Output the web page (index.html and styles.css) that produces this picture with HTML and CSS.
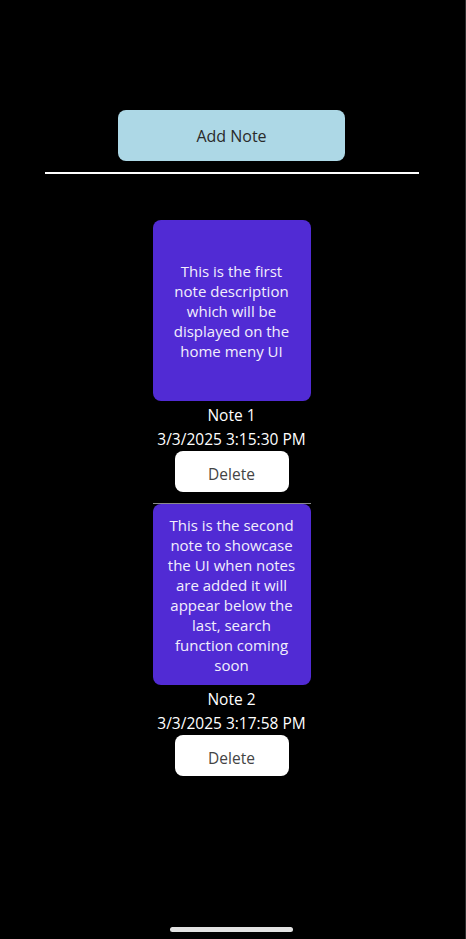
FILE: index.html
```html
<!DOCTYPE html>
<html lang="en">
<head>
<meta charset="utf-8">
<title>Notes</title>
<link rel="stylesheet" href="styles.css">
</head>
<body>
<div class="screen">
  <div class="top">
    <button class="add-btn">Add Note</button>
    <div class="rule"></div>
  </div>
  <div class="notes">
    <div class="note">
      <div class="card">This is the first note description which will be displayed on the home meny UI</div>
      <div class="title">Note 1</div>
      <div class="date">3/3/2025 3:15:30 PM</div>
      <button class="del-btn">Delete</button>
      <div class="sep"></div>
    </div>
    <div class="note">
      <div class="card">This is the second note to showcase the UI when notes are added it will appear below the last, search function coming soon</div>
      <div class="title">Note 2</div>
      <div class="date">3/3/2025 3:17:58 PM</div>
      <button class="del-btn">Delete</button>
    </div>
  </div>
  <div class="home-bar"></div>
</div>
</body>
</html>
```

FILE: styles.css
```css
html, body {
  margin: 0;
  padding: 0;
  background: #000;
}
.screen {
  position: relative;
  width: 463px;
  padding-right: 2px;
  height: 939px;
  border-right: 1px solid #2c2c2c;
  background: #000;
  font-family: "Open Sans", "Noto Sans", sans-serif;
  display: flex;
  flex-direction: column;
  align-items: center;
  overflow: hidden;
}
.top {
  padding-top: 110px;
  display: flex;
  flex-direction: column;
  align-items: center;
}
.add-btn {
  width: 227px;
  height: 51px;
  border: none;
  border-radius: 8px;
  background: #add8e6;
  color: #2a2a2a;
  font-family: inherit;
  font-size: 16px;
  padding: 0;
}
.rule {
  margin-top: 11px;
  width: 374px;
  height: 2px;
  background: #fff;
}
.notes {
  margin-top: 46px;
  display: flex;
  flex-direction: column;
  align-items: center;
}
.note {
  display: flex;
  flex-direction: column;
  align-items: center;
  width: 158px;
}
.card {
  box-sizing: border-box;
  width: 158px;
  height: 181px;
  border-radius: 8px;
  background: #512bd4;
  color: #f2effc;
  font-size: 15px;
  line-height: 20px;
  text-align: center;
  padding: 0 14px;
  display: flex;
  align-items: center;
  justify-content: center;
}
.title, .date {
  color: #fff;
  font-size: 15.5px;
  line-height: 24px;
  margin-top: 0;
}
.title {
  margin-top: 2px;
}
.del-btn {
  width: 114px;
  height: 41px;
  border: none;
  border-radius: 8px;
  background: #fff;
  color: #444;
  font-family: inherit;
  font-size: 15.5px;
  padding: 4px 0 0;
}
.sep {
  margin-top: 11px;
  width: 158px;
  height: 1px;
  background: #8a8a8a;
}
.home-bar {
  position: absolute;
  left: 170px;
  top: 927px;
  width: 123px;
  height: 5px;
  border-radius: 3px;
  background: #e2e2e2;
}
```
